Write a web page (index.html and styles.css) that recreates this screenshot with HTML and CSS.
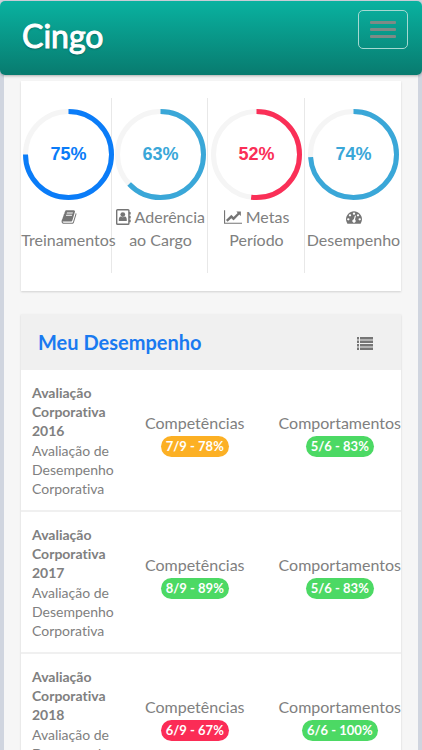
FILE: index.html
```html
<!DOCTYPE html>
<html lang="pt-BR">
<head>
    <meta charset="UTF-8">
    <meta name="viewport" content="width=device-width, initial-scale=1">
    <title>Cingo</title>
    <link rel="stylesheet" href="styles.css">
</head>
<body>
<header class="navbar">
    <a class="brand" href="#">Cingo</a>
    <button class="menu-toggle" type="button" aria-label="Menu">
        <span class="bar"></span>
        <span class="bar"></span>
        <span class="bar"></span>
    </button>
</header>

<main class="page">
    <section class="card indicators">
        <div class="indicator blue">
            <svg class="ring" viewBox="0 0 95 95">
                <circle class="track" cx="47.5" cy="47.5" r="43"/>
                <circle class="value" cx="47.5" cy="47.5" r="43" pathLength="100" stroke-dasharray="75 100" transform="rotate(-90 47.5 47.5)"/>
                <text x="47.5" y="53">75%</text>
            </svg>
            <div class="caption">
                <svg class="icon" viewBox="0 0 1792 1792"><path d="M1703 478q40 57 18 129l-275 906q-19 64-76.5 107.5t-122.5 43.5h-923q-77 0-148.5-53.5t-99.5-131.5q-24-67-2-127 0-4 3-27t4-37q1-8-3-21.5t-3-19.5q2-11 8-21t16.5-23.5 16.5-23.5q23-38 45-91.5t30-91.5q3-10 .5-30t-.5-28q3-11 17-28t17-23q21-36 42-92t25-90q1-9-2.5-32t.5-28q4-13 22-30.5t22-22.5q19-26 42.5-84.5t27.5-96.5q1-8-3-25.5t-2-26.5q2-8 9-18t18-23 17-21q8-12 16.5-30.5t15-35 16-36 19.5-32 26.5-23.5 36-11.5 47.5 5.5l-1 3q38-9 51-9h761q74 0 114 56t18 130l-274 906q-36 119-71.5 153.5t-128.5 34.5h-869q-27 0-38 15-11 16-1 43 24 70 144 70h923q29 0 56-15.5t35-41.5l300-987q7-22 5-57 38 15 59 43zm-1064 2q-4 13 2 22.5t20 9.5h608q13 0 25.5-9.5t16.5-22.5l21-64q4-13-2-22.5t-20-9.5h-608q-13 0-25.5 9.5t-16.5 22.5zm-83 256q-4 13 2 22.5t20 9.5h608q13 0 25.5-9.5t16.5-22.5l21-64q4-13-2-22.5t-20-9.5h-608q-13 0-25.5 9.5t-16.5 22.5z"/></svg>
                Treinamentos
            </div>
        </div>
        <div class="indicator cyan">
            <svg class="ring" viewBox="0 0 95 95">
                <circle class="track" cx="47.5" cy="47.5" r="43"/>
                <circle class="value" cx="47.5" cy="47.5" r="43" pathLength="100" stroke-dasharray="63 100" transform="rotate(-90 47.5 47.5)"/>
                <text x="47.5" y="53">63%</text>
            </svg>
            <div class="caption">
                <svg class="icon narrow" viewBox="0 0 15 16"><path fill-rule="evenodd" d="M1.600 0h10.400q1.600 0 1.600 1.600V3h.6q.5 0 .5.5v1.600q0 .5-.5.5h-.6v1.200h.6q.5 0 .5.5v1.600q0 .5-.5.5h-.6v1.200h.6q.5 0 .5.5v1.600q0 .5-.5.5h-.6v1.200q0 1.600-1.600 1.600H1.600Q0 16 0 14.400V1.600Q0 0 1.600 0zM1.400 1.400v13.200h10.800V1.400z"/><circle cx="6.800" cy="5.600" r="2.400"/><path d="M2.800 12q-.2-4.200 2-4.400 2 1.400 4 0 2.200.2 2 4.400z"/></svg>
                Aderência ao Cargo
            </div>
        </div>
        <div class="indicator red">
            <svg class="ring" viewBox="0 0 95 95">
                <circle class="track" cx="47.5" cy="47.5" r="43"/>
                <circle class="value" cx="47.5" cy="47.5" r="43" pathLength="100" stroke-dasharray="52 100" transform="rotate(-90 47.5 47.5)"/>
                <text x="47.5" y="53">52%</text>
            </svg>
            <div class="caption">
                <svg class="icon wide" viewBox="0 0 2048 1792"><path d="M2048 1536v128h-2048v-1536h128v1408h1920zm-128-1248v435q0 21-19.5 29.5t-35.5-7.5l-121-121-633 633q-10 10-23 10t-23-10l-233-233-416 416-192-192 585-585q10-10 23-10t23 10l233 233 464-464-121-121q-16-16-7.5-35.5t29.5-19.5h435q14 0 23 9t9 23z"/></svg>
                Metas Período
            </div>
        </div>
        <div class="indicator cyan">
            <svg class="ring" viewBox="0 0 95 95">
                <circle class="track" cx="47.5" cy="47.5" r="43"/>
                <circle class="value" cx="47.5" cy="47.5" r="43" pathLength="100" stroke-dasharray="74 100" transform="rotate(-90 47.5 47.5)"/>
                <text x="47.5" y="53">74%</text>
            </svg>
            <div class="caption">
                <svg class="icon" viewBox="0 0 1792 1792"><path d="M384 1152q0-53-37.5-90.5t-90.5-37.5-90.5 37.5-37.5 90.5 37.5 90.5 90.5 37.5 90.5-37.5 37.5-90.5zm192-448q0-53-37.5-90.5t-90.5-37.5-90.5 37.5-37.5 90.5 37.5 90.5 90.5 37.5 90.5-37.5 37.5-90.5zm428 481l101-382q6-26-7.5-48.5t-38.5-29.5-48 6.5-30 39.5l-101 382q-60 5-107 43.5t-63 98.5q-20 77 20 146t117 89 146-20 89-117q16-60-6-117t-72-91zm660-33q0-53-37.5-90.5t-90.5-37.5-90.5 37.5-37.5 90.5 37.5 90.5 90.5 37.5 90.5-37.5 37.5-90.5zm-640-640q0-53-37.5-90.5t-90.5-37.5-90.5 37.5-37.5 90.5 37.5 90.5 90.5 37.5 90.5-37.5 37.5-90.5zm448 192q0-53-37.5-90.5t-90.5-37.5-90.5 37.5-37.5 90.5 37.5 90.5 90.5 37.5 90.5-37.5 37.5-90.5zm320 448q0 261-141 483-19 29-54 29h-1402q-35 0-54-29-141-221-141-483 0-182 71-348t191-286 286-191 348-71 348 71 286 191 191 286 71 348z"/></svg>
                Desempenho
            </div>
        </div>
    </section>

    <section class="card performance">
        <div class="card-header">
            <h2 class="card-title">Meu Desempenho</h2>
            <button class="list-button" type="button" aria-label="Lista">
                <svg class="icon" viewBox="0 0 16 16"><path d="M0 1h2v2.400H0zM3 1h13v2.400H3zM0 4.500h2v2.400H0zM3 4.500h13v2.400H3zM0 8h2v2.400H0zM3 8h13v2.400H3zM0 11.500h2v2.400H0zM3 11.500h13v2.400H3z"/></svg>
            </button>
        </div>
        <div class="review">
            <div class="review-name">
                <strong>Avaliação Corporativa 2016</strong>
                <p>Avaliação de Desempenho Corporativa</p>
            </div>
            <div class="score">
                Competências
                <span class="badge warning">7/9 - 78%</span>
            </div>
            <div class="score">
                Comportamentos
                <span class="badge success">5/6 - 83%</span>
            </div>
        </div>
        <div class="review">
            <div class="review-name">
                <strong>Avaliação Corporativa 2017</strong>
                <p>Avaliação de Desempenho Corporativa</p>
            </div>
            <div class="score">
                Competências
                <span class="badge success">8/9 - 89%</span>
            </div>
            <div class="score">
                Comportamentos
                <span class="badge success">5/6 - 83%</span>
            </div>
        </div>
        <div class="review">
            <div class="review-name">
                <strong>Avaliação Corporativa 2018</strong>
                <p>Avaliação de Desempenho Corporativa</p>
            </div>
            <div class="score">
                Competências
                <span class="badge danger">6/9 - 67%</span>
            </div>
            <div class="score">
                Comportamentos
                <span class="badge success">6/6 - 100%</span>
            </div>
        </div>
    </section>
</main>
</body>
</html>
```
FILE: styles.css
```css
* {
    box-sizing: border-box;
}
html {
    height: 100%;
    background: #d0d5df;
    scrollbar-width: none;
}
body {
    margin: 0;
    padding-top: 1px;
    font-family: Lato, "Liberation Sans", sans-serif;
    font-size: 16px;
    line-height: 23px;
    font-variant-ligatures: none;
    color: #808080;
}

/* top bar */
.navbar {
    display: flex;
    justify-content: space-between;
    align-items: flex-start;
    height: 74px;
    padding: 9px 14px 0 22px;
    border-radius: 5px;
    background: linear-gradient(#09b2a0, #087b6f);
    box-shadow: 0 1px 3px rgba(0, 0, 0, .3);
    position: relative;
}
.brand {
    color: #fff;
    font-size: 32px;
    line-height: 52px;
    text-decoration: none;
    -webkit-text-stroke: 1px #fff;
    text-shadow: 0 1px 2px rgba(0, 0, 0, .4);
}
.menu-toggle {
    display: flex;
    flex-direction: column;
    justify-content: center;
    align-items: center;
    gap: 4px;
    width: 50px;
    height: 39px;
    padding: 0;
    background: transparent;
    border: 1px solid #a5d9d2;
    border-radius: 5px;
}
.bar {
    width: 26px;
    height: 3px;
    border-radius: 1px;
    background: #7e8a86;
}

.page {
    margin: 0 4px;
    padding: 6px 17px;
    background: #f6f6f6;
}
.card {
    background: #fff;
    box-shadow: 0 1px 2px rgba(0, 0, 0, .15);
}

/* indicators */
.indicators {
    display: grid;
    grid-template-columns: minmax(0, 91fr) minmax(0, 96fr) minmax(0, 97fr) minmax(0, 96fr);
    margin-bottom: 23px;
    padding: 17px 0 18px;
}
.indicator {
    height: 175px;
    padding-top: 9px;
    border-right: 1px solid #e8e8e8;
}
.indicator:last-child {
    border-right: 0;
}
.indicator + .indicator {
    padding-left: 1px;
}
.ring {
    display: block;
    width: 95px;
    height: 95px;
}
.ring circle {
    fill: none;
    stroke-width: 5;
}
.ring .track {
    stroke: #f5f5f5;
}
.ring .value {
    stroke: currentColor;
}
.ring text {
    fill: currentColor;
    text-anchor: middle;
    font: bold 18px "Liberation Sans", Arial, sans-serif;
}
.blue {
    color: #0a7cf8;
}
.cyan {
    color: #3aa7d8;
}
.red {
    color: #fa2f57;
}
.caption {
    width: 95px;
    margin-top: 3px;
    text-align: center;
    color: #808080;
}
.icon {
    width: 16px;
    height: 16px;
    fill: #757575;
    vertical-align: -2px;
}
.icon.narrow {
    width: 15px;
}
.icon.wide {
    width: 18px;
}

/* performance list */
.card-header {
    display: flex;
    justify-content: space-between;
    align-items: center;
    height: 56px;
    padding: 0 28px 0 17px;
    background: #f0f0f0;
}
.card-title {
    margin: 0;
    font-size: 20px;
    color: #1a7af0;
}
.list-button {
    padding: 4px 0 0;
    border: 0;
    background: none;
}
.review {
    display: grid;
    grid-template-columns: 90px minmax(0, 1fr) max-content;
    align-items: center;
    padding: 13px 0 12px;
    border-bottom: 2px solid #f0f0f0;
}
.review-name {
    padding-left: 11px;
    font-size: 14px;
    line-height: 19px;
}
.review-name strong {
    display: block;
}
.review-name p {
    margin: 1px 0 0;
}
.score {
    display: flex;
    flex-direction: column;
    align-items: center;
    padding-bottom: 13px;
}
.badge {
    margin-top: 2px;
    padding: 0 5px;
    border-radius: 11px;
    font-size: 13px;
    font-weight: bold;
    line-height: 21px;
    color: #fff;
}
.warning {
    background: #fcb024;
}
.success {
    background: #4cd964;
}
.danger {
    background: #fb2c56;
}
```
